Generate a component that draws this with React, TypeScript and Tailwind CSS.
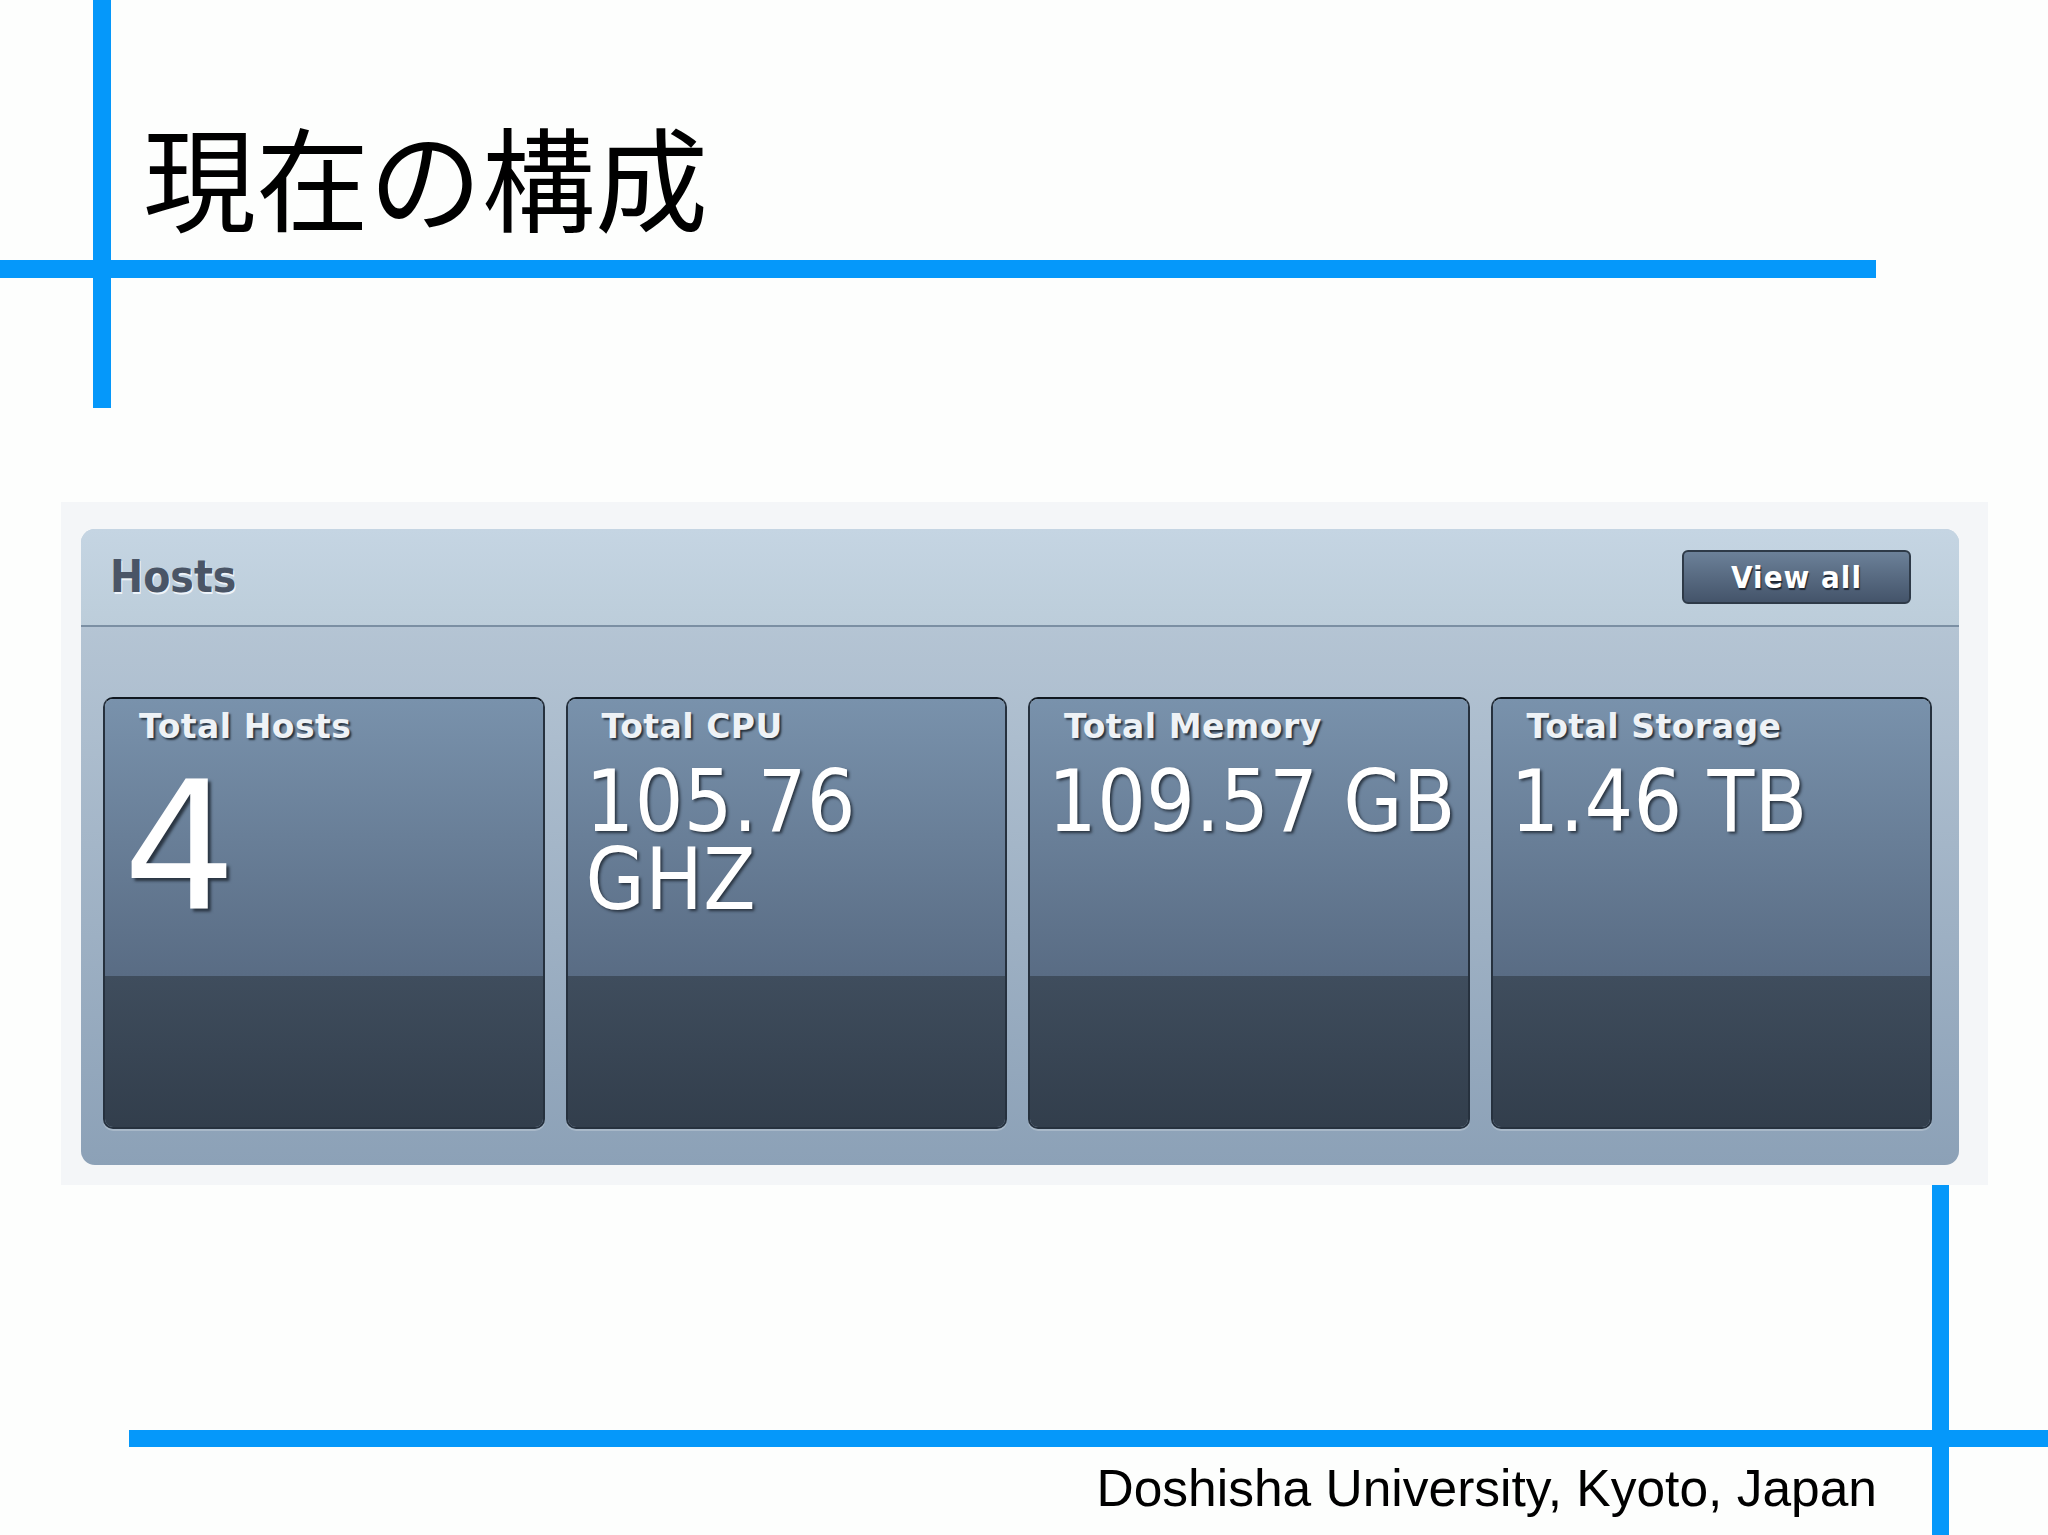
import React from 'react';

const stats = [
  { label: 'Total Hosts', lines: ['4'], big: true },
  { label: 'Total CPU', lines: ['105.76', 'GHZ'] },
  { label: 'Total Memory', lines: ['109.57 GB'] },
  { label: 'Total Storage', lines: ['1.46 TB'] },
];

const condensed = "font-['DejaVu_Sans_Condensed','DejaVu_Sans',sans-serif] [font-stretch:condensed]";

function StatCard({ label, lines, big }: { label: string; lines: string[]; big?: boolean }) {
  return (
    <div className="flex h-[432px] flex-col overflow-hidden rounded-[10px] border-2 border-[#26313e] border-t-[#101820] shadow-[0_2px_0_#a8b8c8]">
      <div className="h-[277px] bg-linear-to-b from-[#7992ac] to-[#596c84] pl-[18px]">
        <div className="pl-[16px] pt-[10px] font-['DejaVu_Sans',sans-serif] text-[33px] font-bold leading-[36px] tracking-[0.5px] text-[#eef2f6] [text-shadow:2px_2px_2px_#26313d]">
          {label}
        </div>
        {big ? (
          <div className="mt-[14px] font-['DejaVu_Sans',sans-serif] text-[178px] leading-none text-white [text-shadow:3px_3px_3px_#2a3542]">
            {lines[0]}
          </div>
        ) : (
          <div
            className={`${condensed} mt-[18px] text-[85px] leading-[78px] tracking-[0.5px] text-white [text-shadow:2px_2px_3px_#2a3542]`}
          >
            {lines.map((l) => (
              <div key={l}>{l}</div>
            ))}
          </div>
        )}
      </div>
      <div className="flex-1 bg-linear-to-b from-[#3f4d5d] to-[#323e4c]" />
    </div>
  );
}

export default function App() {
  return (
    <div className="relative h-[1535px] w-[2048px] overflow-hidden bg-[#fdfefd]">
      {/* slide decoration lines */}
      <div className="absolute left-[93px] top-0 h-[408px] w-[18px] bg-[#0598fa]" />
      <div className="absolute left-0 top-[260px] h-[18px] w-[1876px] bg-[#0598fa]" />
      <div className="absolute left-[129px] top-[1430px] h-[17px] w-[1919px] bg-[#0598fa]" />
      <div className="absolute left-[1932px] top-[1185px] h-[350px] w-[17px] bg-[#0598fa]" />

      <h1 className="pl-[143px] pt-[118px] font-['Noto_Sans_CJK_JP',sans-serif] text-[113px] font-normal leading-[112px] text-black">
        現在の構成
      </h1>

      <div className="ml-[61px] mt-[272px] w-[1927px] bg-[#f4f6f8] pb-[20px] pl-[20px] pr-[29px] pt-[27px]">
        <div className="flex h-[636px] flex-col overflow-hidden rounded-[14px] bg-linear-to-b from-[#bccbd9] to-[#8ca1b7]">
          <div className="flex h-[98px] items-center justify-between border-b-2 border-[#7b8fa3] bg-linear-to-b from-[#c5d5e3] to-[#bccdda] pl-[29px] pr-[48px]">
            <div
              className={`${condensed} text-[44px] font-bold leading-none text-[#4a5566] [text-shadow:1px_2px_0_#eef4fa]`}
            >
              Hosts
            </div>
            <div
              className={`${condensed} flex h-[54px] w-[229px] items-center justify-center rounded-[6px] border-2 border-[#2e3a48] bg-linear-to-b from-[#6c8199] to-[#44546a] text-[31px] font-bold tracking-[1px] text-white [text-shadow:1px_2px_1px_#1e2733]`}
            >
              View all
            </div>
          </div>
          <div className="grid grid-cols-4 gap-[21px] pl-[22px] pr-[27px] pt-[70px]">
            {stats.map((s) => (
              <StatCard key={s.label} {...s} />
            ))}
          </div>
        </div>
      </div>

      <div className="mt-[278px] pr-[171px] text-right font-['Liberation_Sans',Arial,sans-serif] text-[51.5px] leading-none text-black">
        Doshisha University, Kyoto, Japan
      </div>
    </div>
  );
}
